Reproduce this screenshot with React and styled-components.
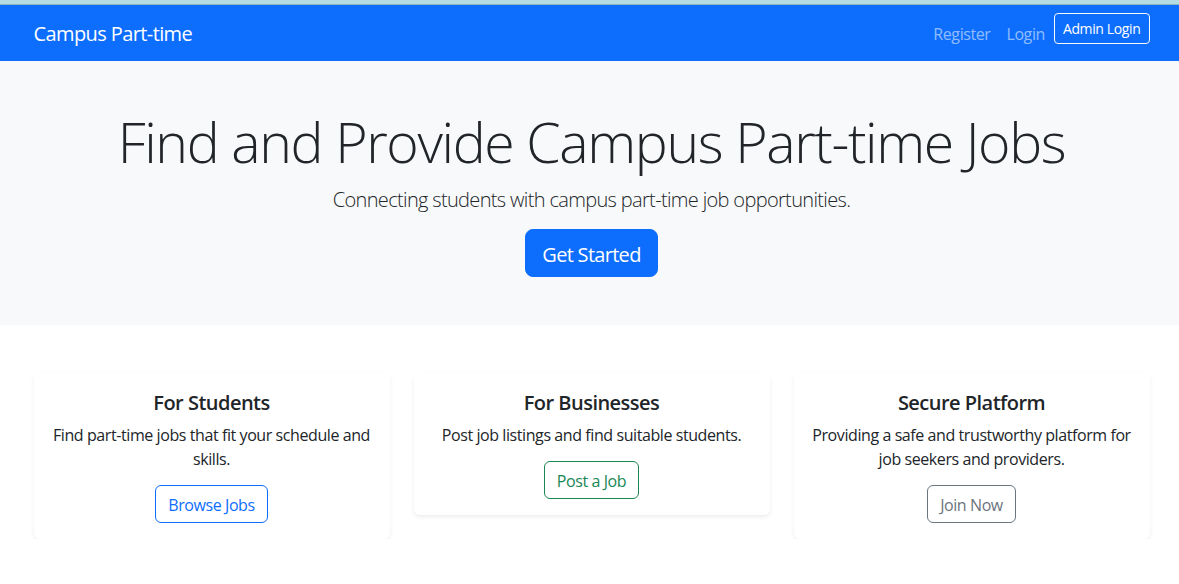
import React from "react";
import styled, { createGlobalStyle } from "styled-components";

const GlobalStyle = createGlobalStyle`
  html, body {
    margin: 0;
    padding: 0;
    overflow-x: hidden;
    background: #fff;
  }
  body {
    font-family: "Open Sans", "Noto Sans", sans-serif;
    color: #212529;
    font-size: 16px;
    line-height: 1.5;
  }
  * {
    letter-spacing: -0.026em;
  }
`;

const Page = styled.div`
  width: 1183px;
`;

const TopStrip = styled.div`
  height: 4px;
  background: #b3dde3;
  border-bottom: 1px solid #8fb3b8;
`;

const Navbar = styled.nav`
  background: #0d6efd;
  padding: 8px 0;
`;

const NavInner = styled.div`
  width: 1116px;
  margin: 0 auto;
  display: flex;
  justify-content: space-between;
  align-items: center;
`;

const Brand = styled.a`
  color: #fff;
  font-size: 20px;
  line-height: 30px;
  padding: 6px 0 4px;
  text-decoration: none;
  letter-spacing: -0.6px;
`;

const NavList = styled.ul`
  display: flex;
  align-items: flex-start;
  list-style: none;
  margin: 0;
  padding: 0;
`;

const NavLink = styled.a`
  display: block;
  padding: 9px 8px 7px;
  color: rgba(255, 255, 255, 0.55);
  text-decoration: none;
  line-height: 24px;
`;

const AdminButton = styled.button`
  margin-left: 1px;
  font-family: inherit;
  font-size: 14px;
  line-height: 21px;
  padding: 4px 8px;
  color: #fff;
  background: transparent;
  border: 1px solid #f8f9fa;
  border-radius: 4px;
`;

const Hero = styled.header`
  background: #f8f9fa;
  padding: 48px;
  text-align: center;
`;

const Title = styled.h1`
  margin: 0 0 8px;
  font-size: 55.4px;
  font-weight: 300;
  line-height: 1.2;
  letter-spacing: -1.38px;
`;

const Lead = styled.p`
  margin: 0 0 14px;
  padding-top: 2px;
  font-size: 20px;
  font-weight: 300;
  line-height: 30px;
  letter-spacing: -0.66px;
`;

const BigButton = styled.button`
  font-family: inherit;
  font-size: 20px;
  line-height: 30px;
  padding: 10px 16px 6px;
  color: #fff;
  background: #0d6efd;
  border: 1px solid #0d6efd;
  border-radius: 8px;
  letter-spacing: -0.7px;
`;

const Features = styled.section`
  width: 1116px;
  margin: 48px auto 0;
  display: grid;
  grid-template-columns: repeat(3, 1fr);
  gap: 24px;
  align-items: start;
`;

const Card = styled.div`
  background: #fff;
  border-radius: 6px;
  box-shadow: 0 2px 4px rgba(0, 0, 0, 0.075);
  padding: 16px;
  text-align: center;
`;

const CardTitle = styled.h5`
  margin: 0 0 6px;
  padding-top: 2px;
  font-size: 20px;
  font-weight: 600;
  line-height: 24px;
`;

const CardText = styled.p`
  margin: 0 0 14px;
  padding-top: 2px;
`;

const tones = {
  primary: "#0d6efd",
  success: "#198754",
  secondary: "#6c757d",
};

const OutlineButton = styled.button`
  font-family: inherit;
  font-size: 16px;
  line-height: 24px;
  padding: 7px 12px 5px;
  background: transparent;
  color: ${({ $tone }) => tones[$tone]};
  border: 1px solid ${({ $tone }) => tones[$tone]};
  border-radius: 6px;
`;

const features = [
  {
    title: "For Students",
    text: "Find part-time jobs that fit your schedule and skills.",
    action: "Browse Jobs",
    tone: "primary",
  },
  {
    title: "For Businesses",
    text: "Post job listings and find suitable students.",
    action: "Post a Job",
    tone: "success",
  },
  {
    title: "Secure Platform",
    text: "Providing a safe and trustworthy platform for job seekers and providers.",
    action: "Join Now",
    tone: "secondary",
  },
];

export default function App() {
  return (
    <Page>
      <GlobalStyle />
      <TopStrip />
      <Navbar>
        <NavInner>
          <Brand href="#">Campus Part-time</Brand>
          <NavList>
            <li>
              <NavLink href="#">Register</NavLink>
            </li>
            <li>
              <NavLink href="#">Login</NavLink>
            </li>
            <li>
              <AdminButton>Admin Login</AdminButton>
            </li>
          </NavList>
        </NavInner>
      </Navbar>
      <Hero>
        <Title>Find and Provide Campus Part-time Jobs</Title>
        <Lead>Connecting students with campus part-time job opportunities.</Lead>
        <BigButton>Get Started</BigButton>
      </Hero>
      <Features>
        {features.map(({ title, text, action, tone }) => (
          <Card key={title}>
            <CardTitle>{title}</CardTitle>
            <CardText>{text}</CardText>
            <OutlineButton $tone={tone}>{action}</OutlineButton>
          </Card>
        ))}
      </Features>
    </Page>
  );
}
